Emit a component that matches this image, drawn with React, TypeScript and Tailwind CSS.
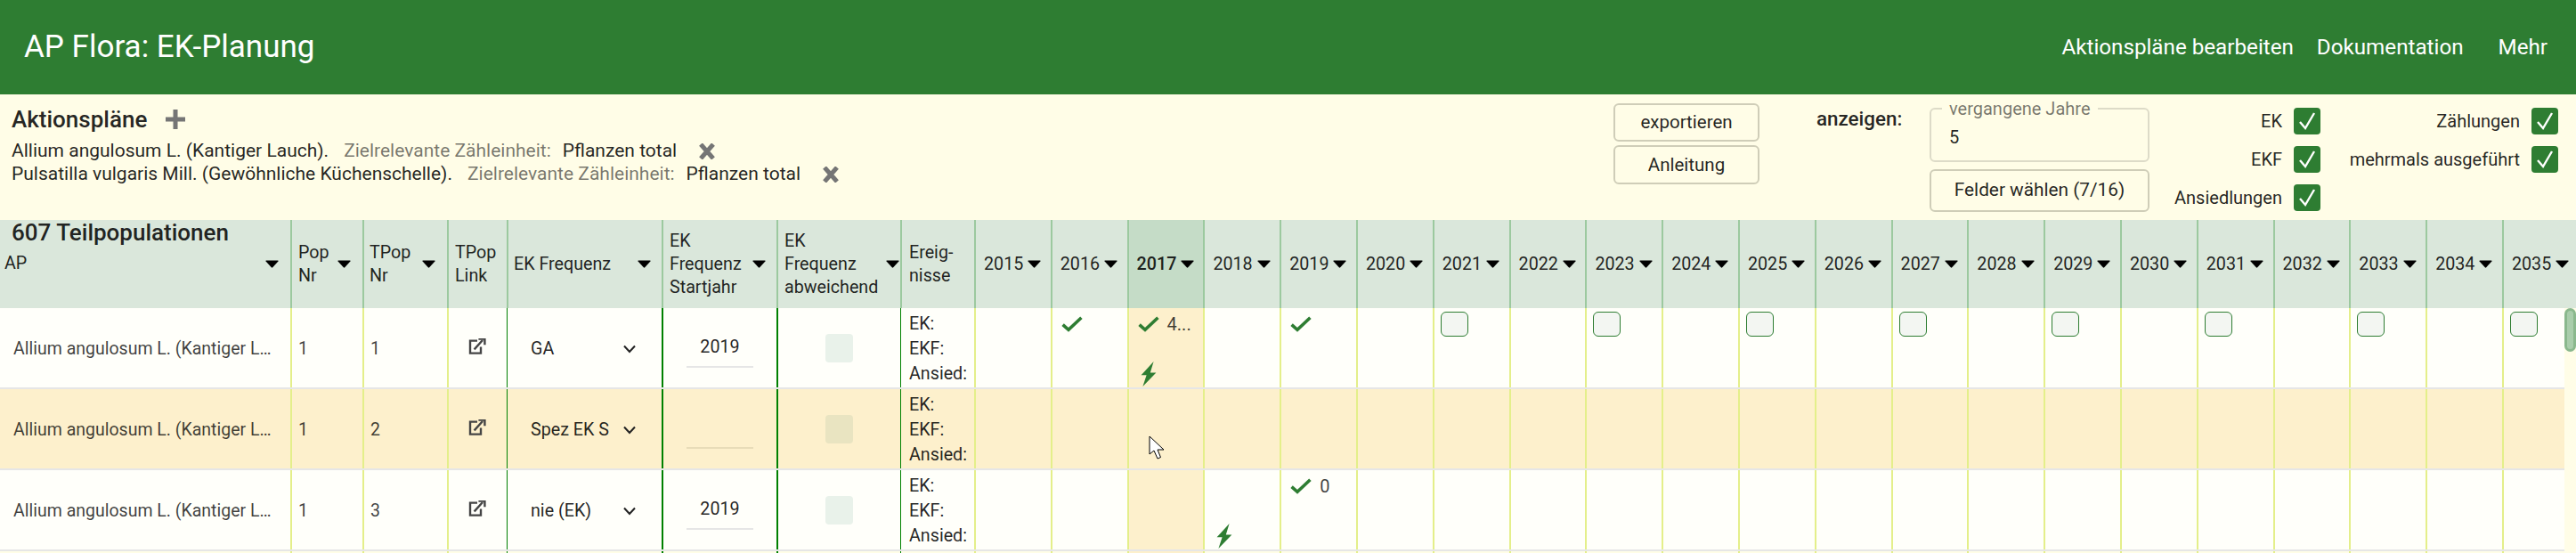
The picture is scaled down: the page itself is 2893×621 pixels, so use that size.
import React from "react";

const GRID = "grid grid-cols-[326px_81px_95px_67px_174px_129px_139px_83px_repeat(21,85.8px)]";
const years = Array.from({ length: 21 }, (_, i) => 2015 + i);

function Caret() {
  return (
    <svg width="15" height="9" viewBox="0 0 15 9" className="shrink-0">
      <path d="M1 0.6h13q.9 0 .4.8L8.2 8.3q-.7.7-1.4 0L.6 1.4Q.1.6 1 .6z" fill="#000" />
    </svg>
  );
}
function Check() {
  return (
    <svg width="24" height="18" viewBox="0 0 24 18" className="shrink-0">
      <path d="M1.6 9.6L8 15.4L22.4 1.8" fill="none" stroke="#2e7d32" strokeWidth="3.6" />
    </svg>
  );
}
function Bolt() {
  return (
    <svg width="18" height="28" viewBox="0 0 18 28" className="shrink-0">
      <path d="M14.6 0L0.6 15.2H6.6L2.4 28L17.4 12.6H10.8z" fill="#2e7d32" />
    </svg>
  );
}
function LinkIcon() {
  return (
    <svg width="20" height="18" viewBox="0 0 20 18" className="shrink-0">
      <path d="M10 2.6H2V16.6H14V9.6" fill="none" stroke="#444" strokeWidth="2.4" />
      <path d="M6.6 12.4L16 2" fill="none" stroke="#444" strokeWidth="2.4" />
      <path d="M11.4 0.6H18.4V7.2" fill="none" stroke="#444" strokeWidth="2.4" />
    </svg>
  );
}
function X() {
  return (
    <svg width="20" height="18" viewBox="0 0 20 18" className="shrink-0">
      <path d="M3 1L17 17M17 1L3 17" stroke="#757575" strokeWidth="5" />
    </svg>
  );
}
function Plus() {
  return (
    <svg width="24" height="24" viewBox="0 0 24 24" className="shrink-0">
      <path d="M12 1V23M1 12H23" stroke="#757575" strokeWidth="5" />
    </svg>
  );
}
function CheckBox() {
  return (
    <div className="w-[30px] h-[30px] rounded-[4px] bg-[#2e7d32] flex items-center justify-center shrink-0">
      <svg width="22" height="24" viewBox="0 0 22 24">
        <path d="M3 13L9 20L19 3" fill="none" stroke="#fff" strokeWidth="2.4" />
      </svg>
    </div>
  );
}
function Opt({ label }: { label: string }) {
  return (
    <div className="flex items-center justify-end gap-[13px] h-[43px]">
      <span className="text-[20px] text-black/87">{label}</span>
      <CheckBox />
    </div>
  );
}
function PanelLine({ name }: { name: string }) {
  return (
    <div className="flex items-center h-[26px] text-[21px] text-black/87">
      <span>{name}</span>
      <span className="ml-[17px] text-black/54">Zielrelevante Zähleinheit:</span>
      <span className="ml-[13px]">Pflanzen total</span>
      <span className="ml-[24px] flex"><X /></span>
    </div>
  );
}

const headBase = "h-[99px] bg-[#dae7db] border-l-2 border-[#9cc99f] flex items-center text-[19.7px] leading-[26px] text-black/87";

function Header() {
  return (
    <div className={GRID + " h-[99px]"}>
      <div className="h-[99px] bg-[#dae7db] flex flex-col pl-[5px] pr-[13px] text-[19.7px] leading-[26px] text-black/87">
        <div className="pl-[8px] h-[28px] text-[26px] leading-[28px] font-medium whitespace-nowrap">607 Teilpopulationen</div>
        <div className="flex items-center justify-between mt-[8px]"><span>AP</span><Caret /></div>
      </div>
      <div className={headBase + " pl-[7px] pr-[13px] justify-between"}><span>Pop<br />Nr</span><Caret /></div>
      <div className={headBase + " pl-[6px] pr-[13px] justify-between"}><span>TPop<br />Nr</span><Caret /></div>
      <div className={headBase + " pl-[7px]"}><span>TPop<br />Link</span></div>
      <div className={headBase + " pl-[6px] pr-[12px] justify-between"}><span>EK Frequenz</span><Caret /></div>
      <div className={headBase + " pl-[7px] pr-[12px] justify-between"}><span>EK<br />Frequenz<br />Startjahr</span><Caret /></div>
      <div className={headBase + " pl-[7px] pr-[1px] justify-between"}><span className="whitespace-nowrap">EK<br />Frequenz<br />abweichend</span><Caret /></div>
      <div className={headBase + " pl-[8px]"}><span>Ereig-<br />nisse</span></div>
      {years.map((y) => (
        <div
          key={y}
          className={
            "h-[99px] border-l-2 border-[#9cc99f] flex items-center pl-[9px] gap-[5px] text-[19.7px] text-black/87 " +
            (y === 2017 ? "bg-[#c5dcc7] font-medium" : "bg-[#dae7db]")
          }
        >
          <span>{y}</span>
          <Caret />
        </div>
      ))}
    </div>
  );
}

type Mark = { check?: boolean; text?: string; bolt?: boolean; box?: boolean };

function YearCell({ year, mark }: { year: number; mark?: Mark }) {
  return (
    <div className={"h-full border-l-2 border-[#e4ef8a] pt-[4px] " + (year === 2017 ? "bg-[#fdf0cc]" : "")}>
      <div className="h-[28px] flex items-center">
        {mark?.box && (
          <div className="ml-[7px] w-[31px] h-[28px] rounded-[6px] border border-[#2e7d32] bg-[#f3f6f2]" />
        )}
        {mark?.check && (
          <div className="ml-[10px] flex items-center">
            <Check />
            {mark.text && <span className="ml-[9px] text-[20px] text-black/75">{mark.text}</span>}
          </div>
        )}
      </div>
      <div className="h-[28px]" />
      <div className="h-[28px] flex items-center">
        {mark?.bolt && (
          <div className="ml-[13px] flex"><Bolt /></div>
        )}
      </div>
    </div>
  );
}

function Row({
  tpop,
  freq,
  start,
  highlight,
  marks,
  cream,
}: {
  tpop: string;
  freq: string;
  start: string;
  highlight?: boolean;
  marks: Record<number, Mark>;
  cream?: boolean;
}) {
  const yellow = "h-full border-l-2 border-[#e4ef8a] flex items-center";
  return (
    <div className={GRID + " h-[91px] border-b-2 border-[#e6e6e6] " + (highlight ? "bg-[#fdf0cc]" : cream ? "bg-[#fffde7]" : "bg-[#fffffa]")}>
      <div className="h-full flex items-center pl-[15px] pr-[18px] pt-[2px] text-[19.5px] text-black/75">
        <span className="truncate">Allium angulosum L. (Kantiger Lauch)</span>
      </div>
      <div className={yellow + " pl-[7px] pt-[2px] text-[19.5px] text-black/75"}>{cream ? "" : "1"}</div>
      <div className={yellow + " pl-[7px] pt-[2px] text-[19.5px] text-black/75"}>{tpop}</div>
      <div className={yellow + " justify-center pb-[4px] pr-[2px]"}><LinkIcon /></div>
      <div className="h-full border-l border-[#008000] flex items-center pl-[26px] pr-[29px] pt-[2px] justify-between text-[19.7px] text-black/87">
        <span className="whitespace-nowrap">{freq}</span>
        <svg width="14" height="10" viewBox="0 0 14 10" className="shrink-0">
          <path d="M1 1.5L7 8L13 1.5" fill="none" stroke="#222" strokeWidth="2" />
        </svg>
      </div>
      <div className="h-full border-l-2 border-[#008000] flex items-center justify-center">
        <div className={"w-[75px] h-[44px] mt-[1px] border-b-2 flex items-center justify-center text-[19.7px] text-black/87 " + (highlight ? "border-[#e8dcb8]" : "border-[#e6e6e6]")}>
          {start}
        </div>
      </div>
      <div className="h-full border-l-2 border-[#008000] flex items-center justify-center">
        <div className={"w-[31px] h-[32px] rounded-[4px] " + (highlight ? "bg-[#e9e4c1]" : "bg-[#e9f2ea]")} />
      </div>
      <div className="h-full border-l border-[#008000] pl-[9px] pt-[4px] text-[19.7px] leading-[28px] text-black/87">
        <div>EK:</div>
        <div>EKF:</div>
        <div>Ansied:</div>
      </div>
      {years.map((y) => (
        <YearCell key={y} year={y} mark={marks[y]} />
      ))}
    </div>
  );
}

export default function App() {
  const boxes: Record<number, Mark> = {};
  for (let y = 2021; y <= 2035; y += 2) boxes[y] = { box: true };
  return (
    <div className="relative w-[2893px] h-[621px] overflow-hidden bg-[#fffde7] [font-family:Roboto,sans-serif]">
      <header className="h-[106px] bg-[#2e7d32] text-white flex items-center pl-[27px] pr-[32px]">
        <div className="text-[35px] flex-1">AP Flora: EK-Planung</div>
        <nav className="flex items-center text-[24.2px]">
          <span>Aktionspläne bearbeiten</span>
          <span className="ml-[26px]">Dokumentation</span>
          <span className="ml-[39px]">Mehr</span>
        </nav>
      </header>

      <section className="h-[141px] bg-[#fffde7] flex">
        <div className="flex-1 pl-[13px] pt-[13px]">
          <div className="flex items-center h-[30px] text-[26px] font-medium text-black/87">
            Aktionspläne
            <span className="ml-[20px] flex"><Plus /></span>
          </div>
          <div className="mt-[8px]">
            <PanelLine name="Allium angulosum L. (Kantiger Lauch)." />
            <PanelLine name="Pulsatilla vulgaris Mill. (Gewöhnliche Küchenschelle)." />
          </div>
        </div>
        <div className="w-[164px] pt-[10px] flex flex-col gap-[4px]">
          <div className="h-[43px] border-2 border-[#cfcdb8] rounded-[6px] flex items-center justify-center text-[20.5px] text-black/87">exportieren</div>
          <div className="h-[44px] border-2 border-[#cfcdb8] rounded-[6px] flex items-center justify-center text-[20.5px] text-black/87">Anleitung</div>
        </div>
        <div className="ml-[64px] w-[103px] pt-[13px] text-[22.4px] leading-[28px] font-medium text-black/87">anzeigen:</div>
        <div className="ml-[24px] w-[247px] pt-[9px]">
          <fieldset className="h-[67px] border-2 border-[#dddbc8] rounded-[6px] px-[12px]">
            <legend className="px-[8px] text-[20px] leading-[14px] text-black/54 whitespace-nowrap">vergangene Jahre</legend>
            <div className="pl-[8px] mt-[11px] text-[20px] leading-[28px] text-black/87">5</div>
          </fieldset>
          <div className="mt-[8px] h-[48px] border-2 border-[#cfcdb8] rounded-[6px] flex items-center justify-center text-[20.8px] text-black/87">Felder wählen (7/16)</div>
        </div>
        <div className="w-[192px] pt-[8px]">
          <Opt label="EK" />
          <Opt label="EKF" />
          <Opt label="Ansiedlungen" />
        </div>
        <div className="w-[267px] pt-[8px]">
          <Opt label="Zählungen" />
          <Opt label="mehrmals ausgeführt" />
        </div>
        <div className="w-[20px]" />
      </section>

      <Header />

      <div className="flex h-[275px]">
        <div className="w-[2880px] overflow-hidden">
          <Row
            tpop="1"
            freq="GA"
            start="2019"
            marks={{
              2016: { check: true },
              2017: { check: true, text: "4...", bolt: true },
              2019: { check: true },
              ...boxes,
            }}
          />
          <Row tpop="2" freq="Spez EK S" start="" highlight marks={{}} />
          <Row tpop="3" freq="nie (EK)" start="2019" marks={{ 2018: { bolt: true }, 2019: { check: true, text: "0" } }} />
          <Row tpop="" freq="" start="" cream marks={{}} />
        </div>
        <div className="w-[13px] bg-[#fffde7]">
          <div className="h-[49px] rounded-full bg-[#8ab88d] p-[3px]">
            <div className="h-full rounded-full bg-[#a9cdab]" />
          </div>
        </div>
      </div>

      <svg width="20" height="28" viewBox="0 0 20 28" className="absolute left-[1290px] top-[489px]">
        <path d="M1 1V21L6 17L10 26L13.5 24.5L10 16H17z" fill="#fff" stroke="#000" strokeWidth="1" />
      </svg>
    </div>
  );
}
